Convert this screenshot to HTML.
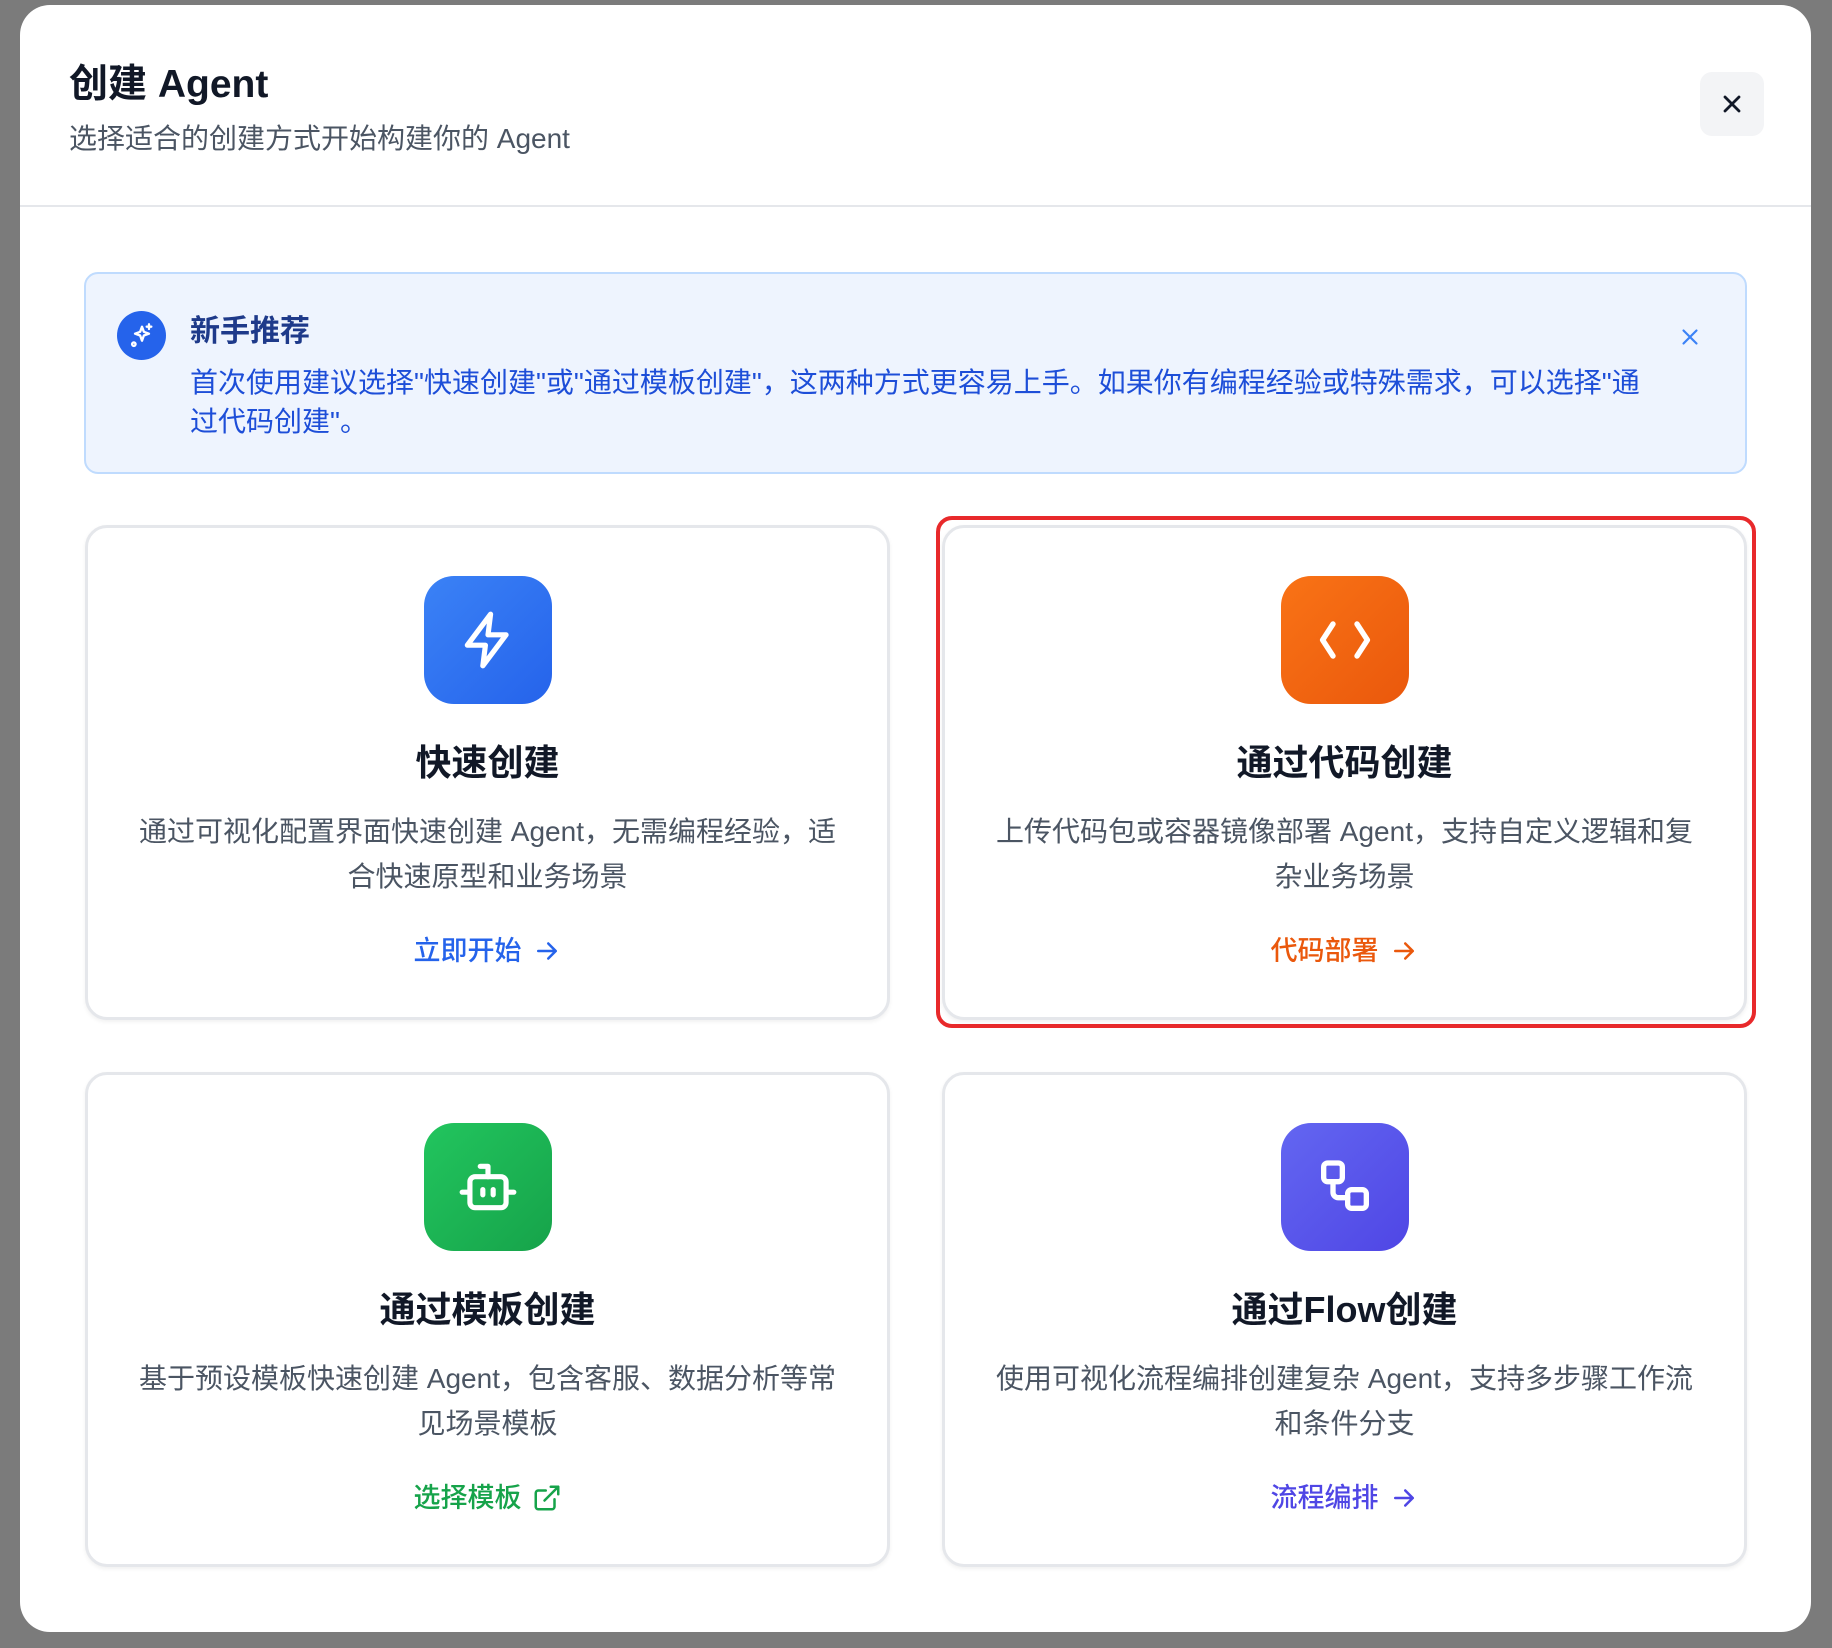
<!DOCTYPE html>
<html><head><meta charset="utf-8">
<style>
*{margin:0;padding:0;box-sizing:border-box}
body{width:1832px;height:1648px;background:#7b7b7b;position:relative;overflow:hidden;font-family:"Liberation Sans","Noto Sans CJK SC",sans-serif}
.modal{position:absolute;left:20px;top:5px;width:1791px;height:1627px;background:#fff;border-radius:30px}
.abs{position:absolute}
.title{left:49px;top:55px;font-size:39px;font-weight:700;color:#111827;line-height:50px}
.sub{left:49px;top:114px;font-size:28px;color:#4b5563;line-height:40px}
.close{left:1680px;top:67px;width:64px;height:64px;background:#f3f4f6;border-radius:12px;display:flex;align-items:center;justify-content:center}
.hr{left:0;top:200px;width:1791px;height:2px;background:#e5e7eb}
.banner{left:64px;top:267px;width:1663px;height:202px;background:#eef4fe;border:2px solid #bfdbfe;border-radius:14px}
.card{position:absolute;width:805px;height:495px;border:3px solid #e5e7eb;border-radius:22px;background:#fff;box-shadow:0 2px 4px rgba(0,0,0,.06);text-align:center}
.icon{position:absolute;left:336px;top:48px;width:128px;height:128px;border-radius:30px;display:flex;align-items:center;justify-content:center}
.ct{position:absolute;left:0;width:100%;top:210px;font-size:36px;font-weight:700;color:#111827;line-height:50px}
.cd{position:absolute;left:0;width:100%;top:281px;font-size:28px;color:#4b5563;line-height:45px}
.cl{position:absolute;left:0;width:100%;top:403px;font-size:27px;font-weight:500;line-height:40px;display:flex;justify-content:center;align-items:center;gap:10px}
</style></head><body>
<div class="modal">
 <div class="abs title">创建 Agent</div>
 <div class="abs sub">选择适合的创建方式开始构建你的 Agent</div>
 <div class="abs close"><svg width="28" height="28" viewBox="0 0 24 24" fill="none" stroke="#111827" stroke-width="2.4" stroke-linecap="round"><path d="M6 6l12 12M18 6L6 18"/></svg></div>
 <div class="abs hr"></div>
 <div class="abs banner">
  <div class="abs" style="left:31px;top:37px;width:49px;height:49px;border-radius:50%;background:#2563eb;display:flex;align-items:center;justify-content:center">
   <svg width="28" height="28" viewBox="0 0 24 24" fill="none" stroke="#fff" stroke-width="2" stroke-linecap="round" stroke-linejoin="round"><path d="M12 4l1.6 4.4L18 10l-4.4 1.6L12 16l-1.6-4.4L6 10l4.4-1.6z"/><path d="M18 2v4M16 4h4"/><circle cx="5" cy="19" r="1.5"/></svg>
  </div>
  <div class="abs" style="left:104px;top:38px;font-size:30px;font-weight:700;color:#1e3a8a;line-height:40px">新手推荐</div>
  <div class="abs" style="left:104px;top:89px;width:1500px;font-size:28px;color:#1d4ed8;line-height:39px">首次使用建议选择"快速创建"或"通过模板创建"，这两种方式更容易上手。如果你有编程经验或特殊需求，可以选择"通<br>过代码创建"。</div>
  <div class="abs" style="left:1591px;top:50px"><svg width="26" height="26" viewBox="0 0 24 24" fill="none" stroke="#3b82f6" stroke-width="2" stroke-linecap="round"><path d="M6 6l12 12M18 6L6 18"/></svg></div>
 </div>

 <div class="card" style="left:65px;top:520px">
  <div class="icon" style="background:linear-gradient(135deg,#3b82f6,#2563eb)"><svg width="62" height="62" viewBox="0 0 24 24" fill="none" stroke="#fff" stroke-width="2" stroke-linejoin="round" stroke-linecap="round"><path d="M13 2L4 14h7l-1 8 9-12h-7z"/></svg></div>
  <div class="ct">快速创建</div>
  <div class="cd">通过可视化配置界面快速创建 Agent，无需编程经验，适<br>合快速原型和业务场景</div>
  <div class="cl" style="color:#2563eb">立即开始 <svg width="30" height="30" viewBox="0 0 24 24" fill="none" stroke="#2563eb" stroke-width="2" stroke-linecap="round" stroke-linejoin="round"><path d="M5 12h14M13 6l6 6-6 6"/></svg></div>
 </div>

 <div class="abs" style="left:916px;top:511px;width:820px;height:512px;border:4px solid #e8292b;border-radius:16px"></div>
 <div class="card" style="left:922px;top:520px">
  <div class="icon" style="background:linear-gradient(135deg,#f97316,#ea580c)"><svg width="96" height="96" viewBox="0 0 24 24" fill="none" stroke="#fff" stroke-width="1.35" stroke-linecap="round" stroke-linejoin="round"><path d="M9 8l-2.6 4L9 16M15 8l2.6 4L15 16"/></svg></div>
  <div class="ct">通过代码创建</div>
  <div class="cd">上传代码包或容器镜像部署 Agent，支持自定义逻辑和复<br>杂业务场景</div>
  <div class="cl" style="color:#ea580c">代码部署 <svg width="30" height="30" viewBox="0 0 24 24" fill="none" stroke="#ea580c" stroke-width="2" stroke-linecap="round" stroke-linejoin="round"><path d="M5 12h14M13 6l6 6-6 6"/></svg></div>
 </div>

 <div class="card" style="left:65px;top:1067px">
  <div class="icon" style="background:linear-gradient(135deg,#22c55e,#16a34a)"><svg width="62" height="62" viewBox="0 0 24 24" fill="none" stroke="#fff" stroke-width="2" stroke-linecap="round" stroke-linejoin="round"><path d="M12 8V4H9"/><rect x="5" y="8" width="14" height="12" rx="2"/><path d="M2 14h2M20 14h2M10 13v2M14 13v2"/></svg></div>
  <div class="ct">通过模板创建</div>
  <div class="cd">基于预设模板快速创建 Agent，包含客服、数据分析等常<br>见场景模板</div>
  <div class="cl" style="color:#16a34a">选择模板 <svg width="30" height="30" viewBox="0 0 24 24" fill="none" stroke="#16a34a" stroke-width="2" stroke-linecap="round" stroke-linejoin="round"><path d="M15 3h6v6M10 14L21 3M18 13v6a2 2 0 0 1-2 2H5a2 2 0 0 1-2-2V8a2 2 0 0 1 2-2h6"/></svg></div>
 </div>

 <div class="card" style="left:922px;top:1067px">
  <div class="icon" style="background:linear-gradient(135deg,#6366f1,#4f46e5)"><svg width="64" height="64" viewBox="0 0 24 24" fill="none" stroke="#fff" stroke-width="2" stroke-linecap="round" stroke-linejoin="round"><rect x="4" y="3" width="7" height="7" rx="1.5"/><rect x="13" y="13" width="7" height="7" rx="1.5"/><path d="M7.5 10v4a2 2 0 0 0 2 2H13"/></svg></div>
  <div class="ct">通过Flow创建</div>
  <div class="cd">使用可视化流程编排创建复杂 Agent，支持多步骤工作流<br>和条件分支</div>
  <div class="cl" style="color:#4f46e5">流程编排 <svg width="30" height="30" viewBox="0 0 24 24" fill="none" stroke="#4f46e5" stroke-width="2" stroke-linecap="round" stroke-linejoin="round"><path d="M5 12h14M13 6l6 6-6 6"/></svg></div>
 </div>
</div>
</body></html>
